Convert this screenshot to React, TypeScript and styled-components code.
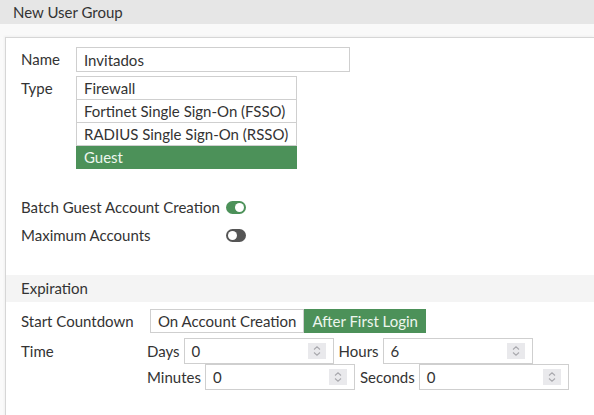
import React from 'react';
import styled, { createGlobalStyle } from 'styled-components';

const GlobalStyle = createGlobalStyle`
  html, body {
    margin: 0;
    padding: 0;
    background: #fafafa;
    font-family: Lato, "Open Sans", sans-serif;
    font-size: 15px;
    color: #333;
  }
`;

const green = '#4c9159';

const Header = styled.div`
  height: 24px;
  line-height: 24px;
  padding-left: 13px;
  background: #e6e6e6;
`;

const Strip = styled.div`
  height: 13px;
  background: #f9f9f9;
`;

const Panel = styled.div`
  margin-left: 5px;
  background: #fff;
  border-top: 1px solid #d6d6d6;
  border-left: 1px solid #d6d6d6;
  box-shadow: -1px -1px 2px rgba(0, 0, 0, 0.04);
  padding-top: 9px;
  min-height: 380px;
`;

const Row = styled.div<{ $label: number; $h?: number; $mb?: number }>`
  display: flex;
  align-items: flex-start;
  padding-left: 15px;
  margin-bottom: ${(p) => p.$mb ?? 0}px;
  & > label {
    width: ${(p) => p.$label}px;
    flex: none;
    line-height: ${(p) => p.$h ?? 25}px;
  }
`;

const TextInput = styled.div<{ $w: number; $h?: number }>`
  width: ${(p) => p.$w}px;
  height: ${(p) => p.$h ?? 25}px;
  box-sizing: border-box;
  border: 1px solid #cfcfcf;
  padding-left: 7px;
  display: flex;
  align-items: center;
  justify-content: space-between;
`;

const OptionList = styled.div`
  width: 219px;
  border: 1px solid #cfcfcf;
  border-bottom: none;
`;

const Option = styled.div<{ $selected?: boolean }>`
  height: 22px;
  line-height: 22px;
  border-bottom: 1px solid #cfcfcf;
  background: ${(p) => (p.$selected ? green : '#fff')};
  color: ${(p) => (p.$selected ? '#eef6ef' : '#333')};
  margin: ${(p) => (p.$selected ? '0 -1px 0 -1px' : '0')};
  padding-left: ${(p) => (p.$selected ? 8 : 7)}px;
  border-bottom-color: ${(p) => (p.$selected ? green : '#cfcfcf')};
`;

const ToggleRow = styled.div`
  display: flex;
  align-items: center;
  height: 28px;
  padding-left: 15px;
  & > label {
    width: 205px;
  }
`;

const Toggle = styled.div<{ $on?: boolean }>`
  width: 20px;
  height: 13px;
  border-radius: 7px;
  background: ${(p) => (p.$on ? green : '#555')};
  position: relative;
  &::after {
    content: '';
    position: absolute;
    top: 2px;
    left: ${(p) => (p.$on ? 9 : 2)}px;
    width: 9px;
    height: 9px;
    border-radius: 50%;
    background: #fff;
  }
`;

const Spacer = styled.div`
  height: 24px;
`;

const SectionBar = styled.div`
  margin-top: 26px;
  height: 27px;
  line-height: 27px;
  padding-left: 15px;
  background: #f4f4f4;
  margin-bottom: 7px;
`;

const ButtonGroup = styled.div`
  display: flex;
  margin-left: 3px;
`;

const SegButton = styled.div<{ $active?: boolean }>`
  height: 24px;
  line-height: 22px;
  box-sizing: border-box;
  padding: 0 7px;
  border: 1px solid ${(p) => (p.$active ? green : '#cfcfcf')};
  background: ${(p) => (p.$active ? green : '#fff')};
  color: ${(p) => (p.$active ? '#eef6ef' : '#333')};
`;

const TimeGrid = styled.div`
  display: flex;
  flex-direction: column;
`;

const TimeLine = styled.div`
  display: flex;
  align-items: center;
  & > span {
    margin: 0 4px 0 0;
  }
  & > span + div + span {
    margin-left: 5px;
  }
`;

const Spinner = styled.div`
  width: 18px;
  height: 16px;
  margin-right: 7px;
  background: #e9e9ec;
  display: flex;
  align-items: center;
  justify-content: center;
`;

const Spin = () => (
  <Spinner>
    <svg width="10" height="12" viewBox="0 0 10 12" fill="none" stroke="#a8a8ad" strokeWidth="1.1">
      <path d="M2 4.5 L5 1.8 L8 4.5" />
      <path d="M2 7.5 L5 10.2 L8 7.5" />
    </svg>
  </Spinner>
);

const NumInput = ({ value }: { value: string }) => (
  <TextInput $w={150} $h={26}>
    <span>{value}</span>
    <Spin />
  </TextInput>
);

export default function App() {
  return (
    <>
      <GlobalStyle />
      <Header>New User Group</Header>
      <Strip />
      <Panel>
        <Row $label={55} $mb={4}>
          <label>Name</label>
          <TextInput $w={274}>Invitados</TextInput>
        </Row>
        <Row $label={55} $h={24}>
          <label>Type</label>
          <OptionList>
            <Option>Firewall</Option>
            <Option>Fortinet Single Sign-On (FSSO)</Option>
            <Option>RADIUS Single Sign-On (RSSO)</Option>
            <Option $selected>Guest</Option>
          </OptionList>
        </Row>
        <Spacer />
        <ToggleRow>
          <label>Batch Guest Account Creation</label>
          <Toggle $on />
        </ToggleRow>
        <ToggleRow>
          <label>Maximum Accounts</label>
          <Toggle />
        </ToggleRow>
        <SectionBar>Expiration</SectionBar>
        <Row $label={126} $h={24} $mb={5}>
          <label>Start Countdown</label>
          <ButtonGroup>
            <SegButton>On Account Creation</SegButton>
            <SegButton $active>After First Login</SegButton>
          </ButtonGroup>
        </Row>
        <Row $label={126} $h={26}>
          <label>Time</label>
          <TimeGrid>
            <TimeLine>
              <span>Days</span>
              <NumInput value="0" />
              <span>Hours</span>
              <NumInput value="6" />
            </TimeLine>
            <TimeLine>
              <span>Minutes</span>
              <NumInput value="0" />
              <span>Seconds</span>
              <NumInput value="0" />
            </TimeLine>
          </TimeGrid>
        </Row>
      </Panel>
    </>
  );
}
